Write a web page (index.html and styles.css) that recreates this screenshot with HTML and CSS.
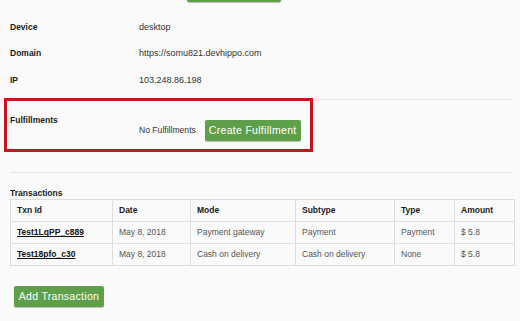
FILE: index.html
```html
<!DOCTYPE html>
<html>
<head>
<meta charset="utf-8">
<link rel="stylesheet" href="styles.css">
</head>
<body>
<div class="page">
  <div class="top-actions"><button class="btn btn-top" aria-label="Save"></button></div>
  <section class="info">
    <div class="row"><div class="label">Device</div><div class="value">desktop</div></div>
    <div class="row"><div class="label">Domain</div><div class="value">https://somu821.devhippo.com</div></div>
    <div class="row"><div class="label">IP</div><div class="value">103.248.86.198</div></div>
  </section>
  <div class="sep"></div>
  <section class="fulfill">
    <div class="label">Fulfillments</div>
    <div class="fulfill-body">
      <span class="value">No Fulfillments</span>
      <button class="btn">Create Fulfillment</button>
    </div>
  </section>
  <div class="sep"></div>
  <section class="txns">
    <div class="section-title">Transactions</div>
    <table class="txn-table">
      <colgroup>
        <col class="c1"><col class="c2"><col class="c3"><col class="c4"><col class="c5"><col class="c6">
      </colgroup>
      <thead>
        <tr><th>Txn Id</th><th>Date</th><th>Mode</th><th>Subtype</th><th>Type</th><th>Amount</th></tr>
      </thead>
      <tbody>
        <tr><td><a class="txn-link" href="#">Test1LqPP_c889</a></td><td>May 8, 2018</td><td>Payment gateway</td><td>Payment</td><td>Payment</td><td>$ 5.8</td></tr>
        <tr><td><a class="txn-link" href="#">Test18pfo_c30</a></td><td>May 8, 2018</td><td>Cash on delivery</td><td>Cash on delivery</td><td>None</td><td>$ 5.8</td></tr>
      </tbody>
    </table>
    <button class="btn btn-add">Add Transaction</button>
  </section>
</div>
<div class="highlight"></div>
</body>
</html>
```

FILE: styles.css
```css
html, body {
  margin: 0;
  padding: 0;
  background: #fafafa;
}
body {
  font-family: "Liberation Sans", Arial, Helvetica, sans-serif;
  color: #333;
  width: 520px;
  height: 321px;
  overflow: hidden;
  position: relative;
}
.page {
  padding: 0 7px 0 10px;
}
.top-actions {
  height: 2px;
  display: flex;
  align-items: flex-end;
}
.btn {
  display: inline-block;
  height: 21px;
  padding: 0 4px;
  border: none;
  border-radius: 2px;
  background: #5f9f4a;
  color: #fff;
  font-family: "Liberation Sans", Arial, Helvetica, sans-serif;
  font-size: 10.5px;
  letter-spacing: 0.3px;
  line-height: 21px;
  box-shadow: 0 1px 1px rgba(0, 0, 0, 0.25);
  cursor: pointer;
}
.btn-top {
  flex: none;
  width: 94px;
  margin-left: 177px;
}
.info {
  padding-top: 11.8px;
}
.row {
  display: flex;
  height: 26.4px;
  align-items: center;
}
.label {
  width: 129px;
  flex: none;
  font-weight: bold;
  font-size: 8.5px;
  color: #1a1a1a;
}
.value {
  font-size: 9px;
  color: #333;
}
.sep {
  height: 1px;
  background: #e6e6e6;
  margin-top: 6px;
}
.fulfill {
  display: flex;
  align-items: flex-start;
  padding: 14px 0 31px;
}
.fulfill .label {
  line-height: 13px;
}
.fulfill-body {
  display: flex;
  align-items: center;
  gap: 9px;
  margin-top: 6px;
}
.fulfill-body .value {
  font-size: 8.6px;
}
.fulfill + .sep {
  margin-top: 0;
}
.txns {
  padding-top: 14px;
}
.section-title {
  font-weight: bold;
  font-size: 8.5px;
  line-height: 12px;
  color: #1a1a1a;
}
.txn-table {
  width: 504px;
  border-collapse: collapse;
  table-layout: fixed;
  font-size: 8.5px;
}
.c1 { width: 102px; }
.c2 { width: 78px; }
.c3 { width: 105px; }
.c4 { width: 99px; }
.c5 { width: 60px; }
.c6 { width: 60px; }
.txn-table th,
.txn-table td {
  border: 1px solid #dedede;
  height: 22px;
  padding: 0 6px;
  text-align: left;
  white-space: nowrap;
  box-sizing: border-box;
}
.txn-table th {
  font-weight: bold;
  color: #1a1a1a;
}
.txn-table td {
  color: #555;
}
.txn-link {
  color: #111;
  font-weight: bold;
  text-decoration: underline;
}
.btn-add {
  display: block;
  width: 90px;
  margin: 20px 0 0 4px;
}
.highlight {
  position: absolute;
  left: 4px;
  top: 98px;
  width: 309px;
  height: 54px;
  box-sizing: border-box;
  border: 3px solid #c4161c;
  pointer-events: none;
}
```
